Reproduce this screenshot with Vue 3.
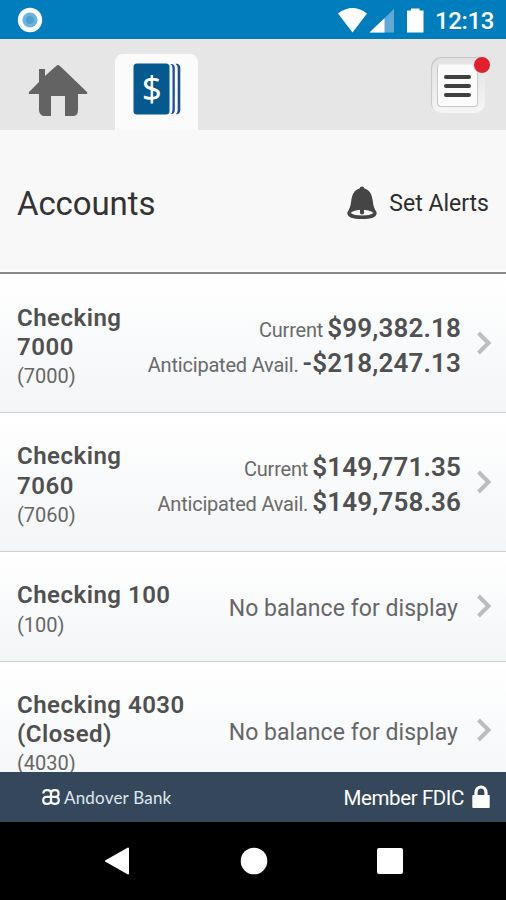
<script setup>
const accounts = [
  {
    name: 'Checking 7000',
    number: '7000',
    narrow: true,
    balances: [
      { label: 'Current', amount: '$99,382.18' },
      { label: 'Anticipated Avail.', amount: '-$218,247.13' },
    ],
  },
  {
    name: 'Checking 7060',
    number: '7060',
    narrow: true,
    balances: [
      { label: 'Current', amount: '$149,771.35' },
      { label: 'Anticipated Avail.', amount: '$149,758.36' },
    ],
  },
  { name: 'Checking 100', number: '100', balances: [] },
  { name: 'Checking 4030 (Closed)', number: '4030', balances: [] },
]
</script>

<template>
  <div class="screen">
    <div class="status">
      <svg class="status-dot" width="26" height="26" viewBox="0 0 26 26">
        <circle cx="13" cy="13" r="12.2" fill="#fff" />
        <circle cx="13" cy="13" r="7.6" fill="#6bb5da" />
        <circle cx="13" cy="13" r="4" fill="#4aa0cf" />
      </svg>
      <div class="status-right">
        <svg width="88" height="28" viewBox="0 0 88 28">
          <g transform="translate(1.500 0)">
            <path d="M0.5 7.5Q15 -3.500 29.500 7.500L15 26.500Z" fill="#fff" />
            <path d="M56.500 3V26.500H32Z" fill="#5fa9d4" />
            <path d="M47 12.200V26.500H32Z" fill="#fff" />
            <path d="M69.500 4.500H73.500V2.500H82V4.500H86V26.500H69.500Z" fill="#fff" />
          </g>
        </svg>
        <span class="time">12:13</span>
      </div>
    </div>

    <nav class="tabs">
      <div class="tab home">
        <svg width="60" height="54" viewBox="0 0 60 54">
          <path
            d="M30 1Q31 1 33 3L59 28Q60 30 58 30H50V46Q50 52 45 52H37V32H23V52H15Q11 50 11 46V30H2Q0 30 1 28L11 18V5H17V12L27 3Q29 1 30 1Z"
            fill="#636363"
          />
        </svg>
      </div>
      <div class="tab active">
        <svg width="48" height="52" viewBox="0 0 48 52">
          <rect x="0.500" y="0.500" width="36" height="51" rx="3.500" fill="#04598f" />
          <path d="M37.500 1H39Q41.800 1.500 41.800 5V47Q41.800 50.500 39 51H37.500Q39.500 50 39.500 47V5Q39.500 2 37.500 1Z" fill="#1c4f91" />
          <path d="M42.500 0.800H44Q47.300 1.500 47.300 5V47Q47.300 50.500 44 51.300H42.500Q44.700 50 44.700 47V5Q44.700 2 42.500 0.800Z" fill="#1c4f91" />
          <text x="18.800" y="38" text-anchor="middle" class="dollar">$</text>
        </svg>
      </div>
      <div class="menu">
        <div class="menu-face">
          <i></i>
          <i></i>
          <i></i>
        </div>
        <span class="badge"></span>
      </div>
    </nav>

    <header class="heading">
      <h1>Accounts</h1>
      <div class="alerts">
        <svg width="30" height="34" viewBox="0 0 30 34">
          <path d="M15 0.500Q17 0.500 17.500 2.500C23 4 25 9 25.800 15C26.300 20 27.500 23 29.500 26Q31 33 15 33Q-1 33 0.500 26C2.500 23 3.700 20 4.200 15C5 9 7 4 12.500 2.500Q13 0.500 15 0.500Z" fill="#454545" />
          <path d="M3.500 27Q8 23.800 15 23.800T26.500 27Q23 29.500 15 29.500T3.500 27Z" fill="#f8f8f8" />
          <path d="M13 23H17V25.500Q17.500 28.500 15 28.500T13 25.500Z" fill="#454545" />
        </svg>
        <span>Set Alerts</span>
      </div>
    </header>

    <main class="list">
      <section v-for="a in accounts" :key="a.number" class="row">
        <div class="name" :class="{ narrow: a.narrow }">
          <strong>{{ a.name }}</strong>
          <small>({{ a.number }})</small>
        </div>
        <div v-if="a.balances.length" class="balances">
          <div v-for="b in a.balances" :key="b.label" class="balance">
            <span>{{ b.label }}</span>
            <b>{{ b.amount }}</b>
          </div>
        </div>
        <div v-else class="none">No balance for display</div>
        <svg class="chevron" width="16" height="24" viewBox="0 0 16 24">
          <path d="M2.500 2L12.500 12L2.500 22" fill="none" stroke="#bdbdbd" stroke-width="4" />
        </svg>
      </section>
    </main>

    <footer class="bank">
      <div class="brand">
        <svg width="18" height="16" viewBox="0 0 18 16">
          <g fill="none" stroke="#f4f7fb" stroke-width="2.200">
            <path d="M1.300 4.500Q1.300 1.200 4.600 1.200H5.500Q9 1.200 9 4.500V11.500Q9 14.800 5.700 14.800H4.500Q1.200 14.800 1.200 11.300T4.500 7.900H13.500Q16.800 7.900 16.800 11.300T13.500 14.800H12.300Q9 14.800 9 11.500V4.500Q9 1.200 12.500 1.200H13.400Q16.600 1.200 16.600 4.500T13.500 7.900" />
          </g>
        </svg>
        <span>Andover Bank</span>
      </div>
      <div class="fdic">
        <span>Member FDIC</span>
        <svg width="18" height="24" viewBox="0 0 18 24">
          <path d="M4 11V7.500A5 5.500 0 0 1 14 7.500V11" fill="none" stroke="#fff" stroke-width="3.200" />
          <rect x="0.300" y="10" width="17.400" height="13" rx="1" fill="#fff" />
        </svg>
      </div>
    </footer>

    <div class="nav">
      <svg width="26" height="28" viewBox="0 0 26 28">
        <path d="M24 1.500V26.500L2 14Z" fill="#fff" stroke="#fff" stroke-width="2" stroke-linejoin="round" />
      </svg>
      <svg width="28" height="28" viewBox="0 0 28 28"><circle cx="14" cy="14" r="13.300" fill="#fff" /></svg>
      <svg width="26" height="28" viewBox="0 0 26 28"><rect y="1" width="26" height="26" rx="2" fill="#fff" /></svg>
    </div>
  </div>
</template>

<style>
body {
  margin: 0;
}
</style>

<style scoped>
.screen {
  width: 506px;
  height: 900px;
  display: flex;
  flex-direction: column;
  overflow: hidden;
  background: #fff;
  font-family: Roboto, 'Liberation Sans', sans-serif;
}
.status {
  flex: none;
  height: 39px;
  box-sizing: border-box;
  padding: 0 12px 0 17px;
  display: flex;
  align-items: center;
  justify-content: space-between;
  background: #007dbc;
  border-bottom: 1px solid #0b78b3;
}
.status-dot {
  margin-top: 2px;
}
.status-right {
  display: flex;
  align-items: center;
  gap: 11px;
  padding-top: 2px;
}
.time {
  padding-top: 2px;
  color: #fff;
  font-size: 24px;
  line-height: 28px;
  font-weight: 500;
  letter-spacing: -0.4px;
}
.tabs {
  flex: none;
  height: 91px;
  display: flex;
  align-items: flex-end;
  background: #e6e6e6;
}
.tab {
  display: flex;
  justify-content: center;
}
.home {
  width: 115px;
  padding-bottom: 12px;
}
.home svg {
  margin-left: 1px;
}
.active {
  width: 83px;
  height: 76px;
  box-sizing: border-box;
  padding-top: 9px;
  background: #fbfbfb;
  border-radius: 8px 8px 0 0;
}
.dollar {
  font-family: 'Noto Sans', sans-serif;
  font-size: 35px;
  font-weight: 400;
  fill: #fff;
}
.menu {
  position: relative;
  width: 54px;
  height: 56px;
  box-sizing: border-box;
  margin: 0 21px 17px auto;
  padding: 7px 5px 5px 6px;
  background: linear-gradient(#e2e2e2, #f5f5f5);
  border-radius: 10px;
  box-shadow: inset 1px 1px 1px #c6c6c6;
}
.menu-face {
  height: 43px;
  width: 41px;
  box-sizing: border-box;
  padding-top: 10px;
  border: 1px solid #c9c9c9;
  border-top-color: #f1f1f1;
  border-radius: 4px;
  background: #fbfbfb;
  display: flex;
  flex-direction: column;
  align-items: center;
  gap: 5px;
}
.menu-face i {
  width: 27px;
  height: 4px;
  border-radius: 2px;
  background: #404040;
}
.badge {
  position: absolute;
  top: -1px;
  right: -6px;
  width: 16px;
  height: 16px;
  border-radius: 50%;
  background: #e0202f;
  border: 1.500px solid #f6e8e8;
}
.heading {
  flex: none;
  height: 144px;
  box-sizing: border-box;
  padding: 3px 17px 0 17px;
  display: flex;
  align-items: center;
  justify-content: space-between;
  background: linear-gradient(#f8f8f8 0 140px, #fff 140px);
  border-bottom: 2px solid #8a8a8a;
}
h1 {
  margin: 2px 0 0;
  color: #333;
  font-size: 33px;
  line-height: 40px;
  font-weight: 400;
  letter-spacing: -0.1px;
}
.alerts {
  display: flex;
  align-items: center;
  gap: 12px;
  padding-top: 1px;
  color: #2d2d2d;
  font-size: 23px;
  font-weight: 400;
}
.list {
  flex: 1;
  min-height: 0;
  overflow: hidden;
}
.row {
  display: flex;
  align-items: center;
  padding: 0 14px 0 17px;
  border-bottom: 1px solid #cdd0d1;
  background: linear-gradient(#fff, #f3f5f7);
  color: #505050;
}
.name {
  flex: none;
  width: 180px;
  padding: 29px 0 22px;
  display: flex;
  flex-direction: column;
}
.name.narrow {
  width: 110px;
}
.name strong {
  padding-top: 0.500px;
  font-size: 24px;
  line-height: 29.200px;
  font-weight: 600;
  letter-spacing: 0.5px;
}
.name small {
  font-size: 20px;
  line-height: 28px;
  color: #666;
  letter-spacing: 0;
}
.balances {
  flex: 1;
  padding-top: 7px;
}
.balance {
  display: flex;
  justify-content: flex-end;
  align-items: baseline;
  gap: 4px;
  height: 35.500px;
  line-height: 35.500px;
  white-space: nowrap;
}
.balance span {
  font-size: 20px;
  letter-spacing: -0.2px;
  color: #6a6a6a;
}
.balance b {
  font-size: 26px;
  font-weight: 600;
  letter-spacing: 0.15px;
}
.none {
  flex: 1;
  padding: 4px 3px 0 0;
  text-align: right;
  font-size: 23px;
  letter-spacing: 0.05px;
  color: #666;
  white-space: nowrap;
}
.chevron {
  flex: none;
  margin-left: 15px;
}
.bank {
  flex: none;
  height: 50px;
  box-sizing: border-box;
  padding: 0 16px 0 42px;
  display: flex;
  align-items: center;
  justify-content: space-between;
  background: #35485b;
  color: #fff;
}
.brand {
  display: flex;
  align-items: center;
  gap: 4px;
  font-family: Lato, sans-serif;
  font-size: 17px;
  letter-spacing: 0.2px;
  color: #dfe7ef;
}
.fdic {
  display: flex;
  align-items: center;
  gap: 8px;
  font-size: 20.500px;
  letter-spacing: -0.4px;
}
.fdic span {
  padding-top: 2px;
}
.nav {
  flex: none;
  height: 78px;
  box-sizing: border-box;
  padding: 0 103px 0 104px;
  display: flex;
  align-items: center;
  justify-content: space-between;
  background: #000;
}
</style>
